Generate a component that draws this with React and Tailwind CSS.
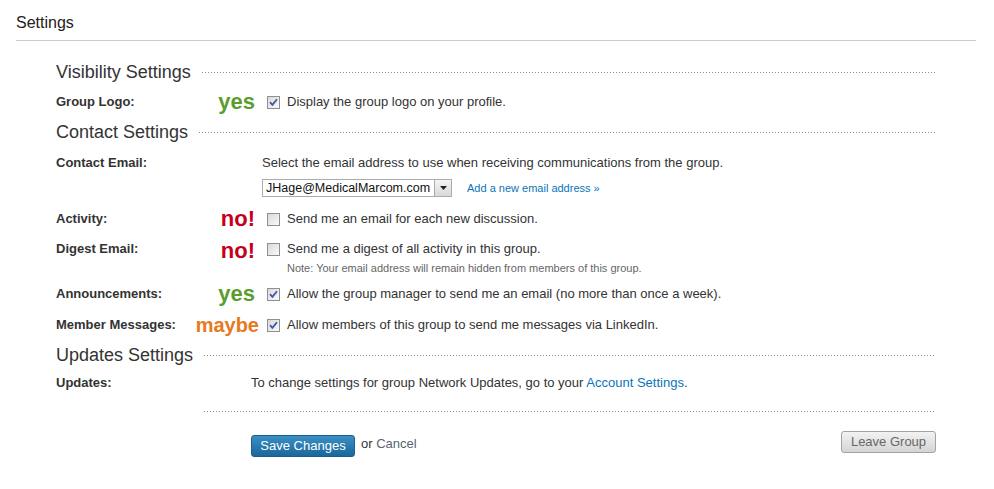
import React from 'react'

const font = { fontFamily: '"Liberation Sans", Arial, sans-serif' }

// dotted rule used beside headings and above the buttons
const DOTS = 'h-px bg-[linear-gradient(to_right,#8a8a8a_1px,transparent_1px)] bg-[length:3px_1px] bg-repeat-x'

function Heading({ children }) {
  return (
    <div className="flex items-center h-[26px]">
      <h2 className="text-[18px] leading-[22px] text-[#333]">{children}</h2>
      <div className={`flex-1 ml-[11px] ${DOTS}`} />
    </div>
  )
}

function Box({ checked }) {
  return (
    <span className="w-[13px] h-[13px] shrink-0 border border-[#8f8f8f] bg-[linear-gradient(135deg,#d9d9d9,#fafafa)] flex items-center justify-center">
      {checked && (
        <svg width="9" height="9" viewBox="0 0 9 9">
          <path d="M1 4.2 L3.4 6.8 L8 1.2" fill="none" stroke="#3e56a8" strokeWidth="1.8" />
        </svg>
      )}
    </span>
  )
}

const NOTE_COLOR = {
  yes: 'text-[#5a9e2c] text-[22px]',
  'no!': 'text-[#c4001a] text-[22px]',
  maybe: 'text-[#e8781c] text-[20px]',
}

function Note({ note, className = 'w-[51px]' }) {
  return (
    <div className={`shrink-0 flex justify-end ${className}`}>
      <span className={`shrink-0 leading-[24px] font-bold whitespace-nowrap ${NOTE_COLOR[note]}`}>
        {note}
      </span>
    </div>
  )
}

function Row({ label, note, checked, text, height, noteClass = 'w-[51px]', boxClass = 'ml-[12px]' }) {
  return (
    <div className={`flex items-center ${height}`}>
      <div className="w-[148px] shrink-0 text-[13px] font-bold text-[#333]">{label}</div>
      <Note note={note} className={noteClass} />
      <div className={`flex items-center ${boxClass}`}>
        <Box checked={checked} />
        <span className="ml-[7px] text-[13px] text-[#333]">{text}</span>
      </div>
    </div>
  )
}

export default function App() {
  return (
    <div style={font} className="w-[994px] h-[489px] bg-white overflow-hidden">
      {/* ── Title ─────────────────────────────────────────── */}
      <div className="mx-4 w-[960px] h-[41px] border-b border-[#cccccc] pt-[14px]">
        <h1 className="text-[16px] leading-[18px] text-[#222]">Settings</h1>
      </div>

      <div className="ml-[56px] w-[880px] mt-[18px]">
        <Heading>Visibility Settings</Heading>
        <Row label="Group Logo:" note="yes" checked text="Display the group logo on your profile." height="h-[34px]" />

        <Heading>Contact Settings</Heading>

        {/* Contact email */}
        <div className="flex h-[60px] pt-[10px]">
          <div className="w-[206px] shrink-0 text-[13px] leading-[16px] font-bold text-[#333]">Contact Email:</div>
          <div>
            <p className="text-[13px] leading-[16px] text-[#333]">
              Select the email address to use when receiving communications from the group.
            </p>
            <div className="flex items-center mt-[8px]">
              <div className="flex items-center w-[190px] h-[18px] border border-[#a5acb2] bg-white">
                <span className="flex-1 pl-[3px] text-[12.5px] leading-[16px] text-[#111] whitespace-nowrap">JHage@MedicalMarcom.com</span>
                <span className="w-[17px] h-[16px] shrink-0 border-l border-[#a5acb2] bg-[linear-gradient(#f4f4f4,#d8d8d8)] flex items-center justify-center">
                  <svg width="7" height="4" viewBox="0 0 7 4">
                    <path d="M0 0 H7 L3.5 4 Z" fill="#222" />
                  </svg>
                </span>
              </div>
              <a className="ml-[15px] text-[11px] text-[#0a74b9]">Add a new email address »</a>
            </div>
          </div>
        </div>

        <Row label="Activity:" note="no!" text="Send me an email for each new discussion." height="h-[28px]" />

        {/* Digest email with note */}
        <div className="flex h-[44px] pt-[8px]">
          <div className="w-[148px] shrink-0 text-[13px] leading-[16px] font-bold text-[#333]">Digest Email:</div>
          <Note note="no!" className="w-[51px] -mt-[2px] h-[24px]" />
          <div className="ml-[12px]">
            <div className="flex items-center h-[16px]">
              <Box />
              <span className="ml-[7px] text-[13px] text-[#333]">Send me a digest of all activity in this group.</span>
            </div>
            <p className="ml-[20px] mt-[4px] text-[11px] leading-[14px] text-[#666]">
              Note: Your email address will remain hidden from members of this group.
            </p>
          </div>
        </div>

        <Row label="Announcements:" note="yes" checked text="Allow the group manager to send me an email (no more than once a week)." height="h-[34px]" />
        <Row label="Member Messages:" note="maybe" checked noteClass="w-[55px]" boxClass="ml-[8px]" text="Allow members of this group to send me messages via LinkedIn." height="h-[28px]" />

        <div className="mt-[3px]">
          <Heading>Updates Settings</Heading>
        </div>

        <div className="flex items-center h-[30px]">
          <div className="w-[195px] shrink-0 text-[13px] font-bold text-[#333]">Updates:</div>
          <p className="text-[13px] text-[#333]">
            To change settings for group Network Updates, go to your{' '}
            <a className="text-[#0a74b9]">Account Settings</a>.
          </p>
        </div>

        {/* ── Actions ───────────────────────────────────────── */}
        <div className={`ml-[148px] mt-[13px] ${DOTS}`} />
        <div className="flex items-start justify-between ml-[195px]">
          <div className="flex items-center mt-[23px]">
            <button className="w-[104px] h-[22px] rounded-[3px] border border-[#1d5f8c] bg-[linear-gradient(#3a8fc4,#1a679c)] text-white text-[13px] leading-[20px]">
              Save Changes
            </button>
            <span className="ml-[6px] text-[13px] text-[#333] -mt-[4px]">
              or <a className="text-[#5a6472]">Cancel</a>
            </span>
          </div>
          <button className="mt-[19px] w-[95px] h-[22px] rounded-[3px] border border-[#a3a3a3] bg-[linear-gradient(#f2f2f2,#d4d4d4)] text-[#666] text-[13px] leading-[20px]">
            Leave Group
          </button>
        </div>
      </div>
    </div>
  )
}
